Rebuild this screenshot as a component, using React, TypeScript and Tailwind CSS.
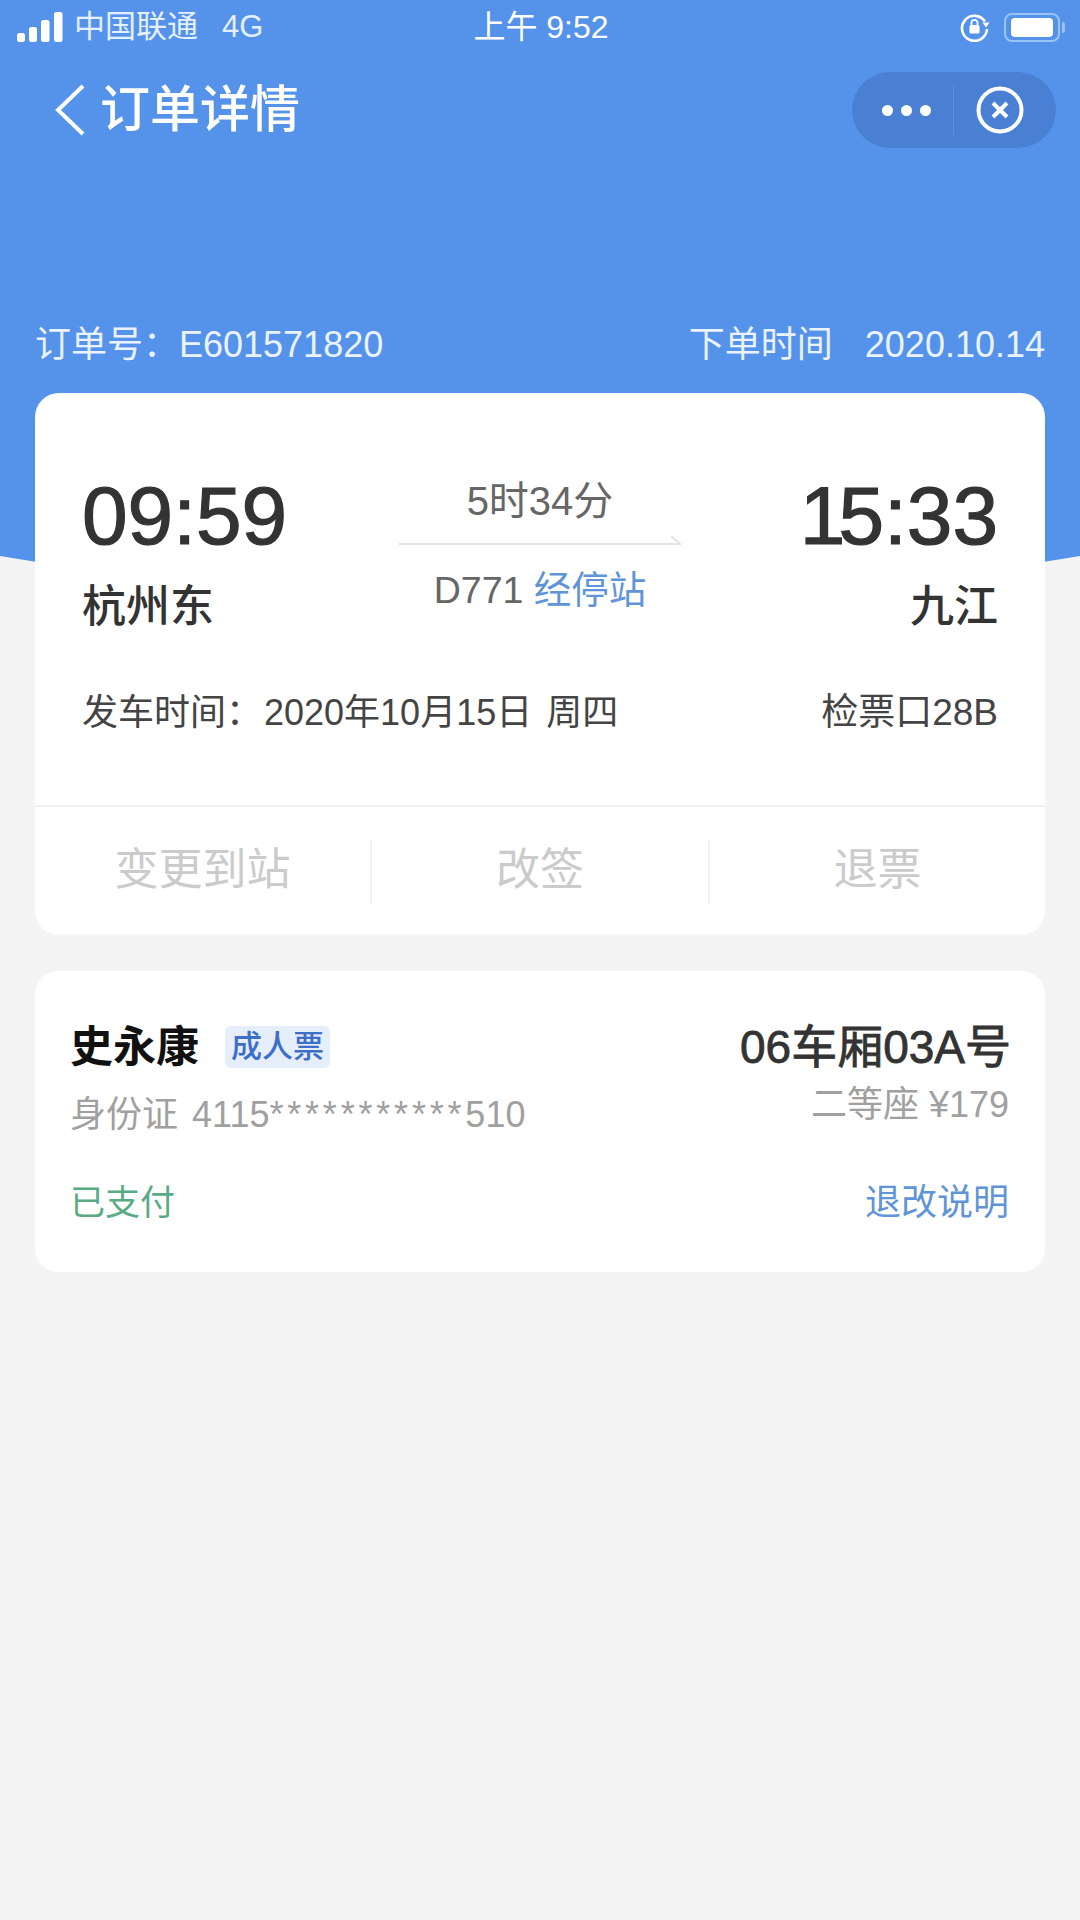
const SignalIcon = () => (
  <svg width="46" height="30" viewBox="0 0 46 30" fill="#fff">
    <rect x="0" y="21" width="8" height="9" rx="2.5" />
    <rect x="12" y="15" width="8" height="15" rx="2.5" />
    <rect x="24" y="8" width="8.5" height="22" rx="2.5" />
    <rect x="37" y="0" width="8.5" height="30" rx="2.5" />
  </svg>
);

const LockIcon = () => (
  <svg width="30" height="30" viewBox="0 0 30 30" fill="none">
    <path d="M25 9.5A12.5 12.5 0 1 0 27 17" stroke="#fff" strokeWidth="2.6" />
    <path d="M22.5 10.5h7l-3.5 5z" fill="#fff" />
    <rect x="9.5" y="13" width="10" height="8.5" rx="1.5" fill="#fff" />
    <path d="M11.5 13v-2.2a3 3 0 0 1 6 0V13" stroke="#fff" strokeWidth="1.8" />
  </svg>
);

const BatteryIcon = () => (
  <div className="flex items-center gap-[2px]">
    <div className="flex h-[29px] w-[56px] items-center justify-center rounded-[8px] border-2 border-[#9cc3f6]">
      <div className="h-[19px] w-[42px] rounded-[4px] bg-white" />
    </div>
    <div className="h-[11px] w-[3px] rounded-r-full bg-[#9cc3f6]" />
  </div>
);

const App = () => {
  return (
    <div className="relative h-[1920px] w-[1080px] overflow-hidden bg-[#f4f4f5] font-['Liberation_Sans','Noto_Sans_CJK_SC',sans-serif]">
      <div className="absolute left-[-460px] top-0 h-[598px] w-[2000px] rounded-[0_0_1000px_1000px/0_0_265px_265px] bg-[#5593ea]" />

      <div className="relative flex flex-col">
        {/* status bar */}
        <div className="grid h-[54px] grid-cols-[1fr_auto_1fr] items-center pl-[17px] pr-[15px] text-[31px] text-[#e4efff]">
          <div className="flex items-center">
            <SignalIcon />
            <span className="ml-[11px]">中国联通</span>
            <span className="ml-[24px]">4G</span>
          </div>
          <div className="text-[32px] text-white">上午 9:52</div>
          <div className="flex items-center justify-end gap-[14px]">
            <LockIcon />
            <BatteryIcon />
          </div>
        </div>

        {/* nav bar */}
        <div className="flex h-[112px] items-center justify-between pl-[54px] pr-[24px]">
          <div className="flex items-center">
            <svg width="32" height="52" viewBox="0 0 32 52" fill="none">
              <path d="M29 2 4 26l25 24" stroke="#fff" strokeWidth="4" />
            </svg>
            <span className="ml-[14px] text-[50px] font-medium text-white">订单详情</span>
          </div>
          <div className="flex h-[76px] w-[204px] items-center rounded-full bg-[#4a80d3]">
            <div className="flex h-[50px] w-[102px] items-center justify-center gap-[8px] border-r border-[#5c8fdd] pl-[8px]">
              <span className="h-[11px] w-[11px] rounded-full bg-white" />
              <span className="h-[11px] w-[11px] rounded-full bg-white" />
              <span className="h-[11px] w-[11px] rounded-full bg-white" />
            </div>
            <div className="flex flex-1 items-center justify-center pr-[10px]">
              <svg width="48" height="48" viewBox="0 0 48 48" fill="none" stroke="#fff">
                <circle cx="24" cy="24" r="21.5" strokeWidth="4" />
                <path d="M17 17l14 14M31 17 17 31" strokeWidth="4" />
              </svg>
            </div>
          </div>
        </div>

        {/* order number */}
        <div className="mt-[154px] flex h-[50px] items-center justify-between px-[35px] text-[36px] text-[#eaf2ff]">
          <span>订单号：E601571820</span>
          <span>
            下单时间<span className="ml-[32px]">2020.10.14</span>
          </span>
        </div>

        {/* train card */}
        <div className="mx-[35px] mt-[23px] rounded-[24px] bg-white">
          <div className="h-[414px] border-b-2 border-[#f0f0f0] px-[47px] pt-[78px]">
            <div className="grid grid-cols-[1fr_auto_1fr]">
              <div>
                <div className="h-[90px] text-[82px] leading-[90px] text-[#333] [-webkit-text-stroke:1.2px_#333]">09:59</div>
                <div className="mt-[16px] h-[60px] text-[44px] font-medium leading-[60px] text-[#333]">杭州东</div>
              </div>
              <div className="flex w-[282px] flex-col items-center">
                <div className="mt-[5px] h-[50px] text-[40px] leading-[50px] text-[#666]">5时34分</div>
                <svg className="mt-[9px]" width="282" height="10" viewBox="0 0 282 10" fill="none">
                  <path d="M0 9h281l-9-8" stroke="#e3e3e3" strokeWidth="2" />
                </svg>
                <div className="mt-[20px] h-[50px] text-[37.5px] leading-[50px] text-[#666]">
                  D771 <span className="text-[#5f95d8]">经停站</span>
                </div>
              </div>
              <div className="text-right">
                <div className="h-[90px] text-[82px] leading-[90px] text-[#333] [-webkit-text-stroke:1.2px_#333]">
                  <span className="tracking-[-7px]">1</span>5:33
                </div>
                <div className="mt-[16px] h-[60px] text-[44px] font-medium leading-[60px] text-[#333]">九江</div>
              </div>
            </div>
            <div className="mt-[51px] flex h-[50px] items-center justify-between text-[#444]">
              <span className="text-[36px]">
                发车时间：<span className="ml-[2px]">2020年10月15日</span>
                <span className="ml-[14px]">周四</span>
              </span>
              <span className="text-[37px]">检票口28B</span>
            </div>
          </div>
          <div className="grid h-[128px] grid-cols-[337px_338px_1fr] items-center text-center text-[44px] text-[#cbcbcb]">
            <div className="flex h-[63px] items-center justify-center border-r-2 border-[#f0f0f0] pb-[3px]">变更到站</div>
            <div className="flex h-[63px] items-center justify-center border-r-2 border-[#f0f0f0] pb-[3px]">改签</div>
            <div className="pb-[3px]">退票</div>
          </div>
        </div>

        {/* passenger card */}
        <div className="mx-[35px] mt-[36px] h-[301px] rounded-[24px] bg-white pl-[35px] pr-[36px] pt-[51px]">
          <div className="flex h-[50px] items-center justify-between">
            <div className="flex items-center">
              <span className="text-[43px] font-bold text-[#111]">史永康</span>
              <span className="ml-[26px] flex h-[42px] w-[105px] items-center justify-center rounded-[6px] bg-[#e6eefb] text-[31px] font-medium text-[#3d6fc8]">
                成人票
              </span>
            </div>
            <span className="mr-[-2px] text-[46px] text-[#333] [-webkit-text-stroke:0.8px_#333]">06车厢03A号</span>
          </div>
          <div className="flex h-[62px] justify-between text-[36px] text-[#a0a0a0]">
            <span className="mt-[16px]">
              身份证<span className="ml-[14px]">4115</span>
              <span className="tracking-[3.8px]">***********</span>510
            </span>
            <span className="mt-[6px]">二等座 ¥179</span>
          </div>
          <div className="mt-[44px] flex h-[50px] items-center justify-between">
            <span className="text-[35px] text-[#5aab83]">已支付</span>
            <span className="text-[36px] text-[#5f95d8]">退改说明</span>
          </div>
        </div>
      </div>
    </div>
  );
};

export default App;
